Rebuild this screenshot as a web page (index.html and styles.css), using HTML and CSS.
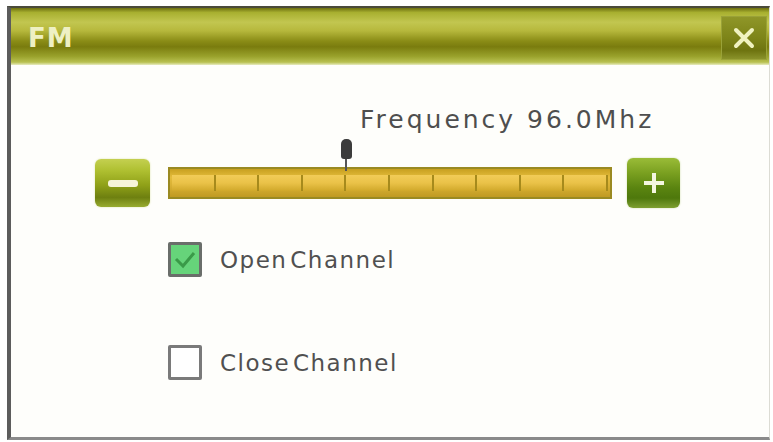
FILE: index.html
```html
<!DOCTYPE html>
<html>
<head>
<meta charset="utf-8">
<link rel="stylesheet" href="styles.css">
</head>
<body>
<div class="window">
  <div class="titlebar">
    <span class="title">FM</span>
    <button class="close" aria-label="Close">
      <svg width="22" height="22" viewBox="0 0 22 22"><path d="M3 3 L19 19 M19 3 L3 19" stroke="#f0f2c0" stroke-width="4" stroke-linecap="round"/></svg>
    </button>
  </div>
  <div class="content">
    <div class="freq">Frequency 96.0Mhz</div>
    <div class="slider-row">
      <button class="btn minus" aria-label="Decrease"><span class="minus-bar"></span></button>
      <div class="track">
        <div class="seg"></div><div class="seg"></div><div class="seg"></div><div class="seg"></div><div class="seg"></div>
        <div class="seg"></div><div class="seg"></div><div class="seg"></div><div class="seg"></div><div class="seg"></div>
        <div class="thumb"><span class="thumb-head"></span><span class="thumb-line"></span></div>
      </div>
      <button class="btn plus" aria-label="Increase">
        <svg width="26" height="26" viewBox="0 0 26 26"><path d="M13 3 V23 M3 13 H23" stroke="#f4f6e0" stroke-width="4"/></svg>
      </button>
    </div>
    <label class="option open">
      <span class="box checked">
        <svg width="26" height="26" viewBox="0 0 26 26"><path d="M4 12 L11 19 L22 6" stroke="#3a9a48" stroke-width="3" fill="none"/></svg>
      </span>
      <span class="label">Open Channel</span>
    </label>
    <label class="option closech">
      <span class="box"></span>
      <span class="label">Close Channel</span>
    </label>
  </div>
</div>
</body>
</html>
```

FILE: styles.css
```css
html, body {
  margin: 0;
  padding: 0;
  background: #ffffff;
}
body {
  width: 773px;
  height: 442px;
  overflow: hidden;
  font-family: "DejaVu Sans", "Liberation Sans", sans-serif;
}
.window {
  margin: 6px 3px 0 7px;
  height: 434px;
  box-sizing: border-box;
  border-left: 4px solid #5c5c5c;
  border-top: 2px solid #4a4a3a;
  border-bottom: 3px solid #8a8a8a;
  border-right: 1px solid #dcdcd4;
  background: #fefefb;
  display: flex;
  flex-direction: column;
}
.titlebar {
  height: 57px;
  flex: none;
  display: flex;
  align-items: center;
  justify-content: space-between;
  padding: 0 2px 0 17px;
  background: linear-gradient(to bottom,
    #6e7010 0%, #a8b030 8%, #c2c650 25%, #b6b83c 40%,
    #8a8c16 58%, #7a7c0e 68%, #9aa22c 85%, #b8c050 95%, #e8ecc0 100%);
}
.title {
  color: #eef0c4;
  font-weight: bold;
  font-size: 26px;
  letter-spacing: 1px;
  margin-top: 2px;
}
.close {
  width: 46px;
  height: 44px;
  margin-top: 2px;
  border: 1px solid #9aa238;
  background: linear-gradient(to bottom, #8f9628 0%, #7d8418 50%, #6e7410 80%, #8a922a 100%);
  display: flex;
  align-items: center;
  justify-content: center;
  padding: 0;
}
.content {
  flex: 1;
  display: flex;
  flex-direction: column;
}
.freq {
  margin: 40px 0 0 349px;
  font-size: 25px;
  letter-spacing: 3px;
  color: #4e4e4e;
  line-height: 30px;
}
.slider-row {
  display: flex;
  align-items: center;
  margin: 23px 0 0 84px;
}
.btn {
  border: none;
  padding: 0;
  border-radius: 6px;
  display: flex;
  align-items: center;
  justify-content: center;
}
.minus {
  width: 55px;
  height: 48px;
  background: linear-gradient(to bottom, #c4d050 0%, #aebf30 25%, #8fa018 55%, #6e8010 80%, #98ac30 100%);
  box-shadow: 0 0 2px #d8e0a0;
}
.minus-bar {
  width: 30px;
  height: 7px;
  border-radius: 3px;
  background: #f6f4d8;
}
.plus {
  width: 53px;
  height: 50px;
  margin-left: 15px;
  background: linear-gradient(to bottom, #9abc38 0%, #7aa020 30%, #5a8410 60%, #4e780c 80%, #7ea030 100%);
  box-shadow: 0 0 2px #c8d8a0;
}
.track {
  position: relative;
  margin-left: 18px;
  width: 444px;
  height: 32px;
  box-sizing: border-box;
  border: 2px solid #9a8a22;
  background: linear-gradient(to bottom, #c8a020 0%, #e4bc3c 30%, #d8b034 60%, #c09a22 100%);
  display: flex;
  padding: 6px 2px;
}
.seg {
  flex: 1;
  border-right: 2px solid #a68a1c;
  background: linear-gradient(to bottom, #f2cc58 0%, #eac248 50%, #d0a82a 100%);
}
.seg:last-of-type {
  border-right: none;
}
.thumb {
  position: absolute;
  left: 170px;
  top: -30px;
  width: 12px;
  display: flex;
  flex-direction: column;
  align-items: center;
}
.thumb-head {
  width: 11px;
  height: 20px;
  border-radius: 5px 5px 3px 3px;
  background: #3c3c3c;
}
.thumb-line {
  width: 2px;
  height: 12px;
  background: #555;
}
.option {
  display: flex;
  align-items: center;
  margin-left: 157px;
}
.open {
  margin-top: 34px;
}
.closech {
  margin-top: 68px;
}
.box {
  width: 34px;
  height: 35px;
  box-sizing: border-box;
  border: 3px solid #7a7a7a;
  border-radius: 2px;
  background: #ffffff;
  display: flex;
  align-items: center;
  justify-content: center;
}
.box.checked {
  border-color: #6a6e6a;
  background: #66d47a;
}
.label {
  margin-left: 18px;
  font-size: 23px;
  letter-spacing: 1.5px;
  word-spacing: -6px;
  color: #505050;
}
```
